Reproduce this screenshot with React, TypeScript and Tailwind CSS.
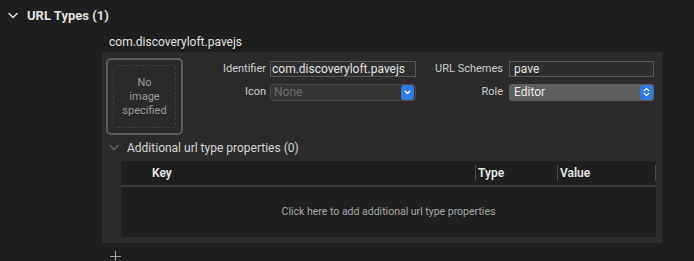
import React from "react";

const FONT = { fontFamily: "Roboto, 'Noto Sans', sans-serif" };

function Chevron({ className = "" }: { className?: string }) {
  return (
    <svg width="10" height="7" viewBox="0 0 10 7" className={className}>
      <path d="M1 1.5 L5 5.5 L9 1.5" fill="none" stroke="currentColor" strokeWidth="1.6" strokeLinecap="round" strokeLinejoin="round" />
    </svg>
  );
}

function BlueButton({ double }: { double?: boolean }) {
  return (
    <div className="flex h-[15px] w-[13px] items-center justify-center rounded-[3px] bg-[#2f7ae5]">
      {double ? (
        <svg width="7" height="10" viewBox="0 0 7 10">
          <path d="M1.2 3.6 L3.5 1.4 L5.8 3.6 M1.2 6.4 L3.5 8.6 L5.8 6.4" fill="none" stroke="white" strokeWidth="1.3" strokeLinecap="round" strokeLinejoin="round" />
        </svg>
      ) : (
        <svg width="7" height="5" viewBox="0 0 7 5">
          <path d="M1.2 1.2 L3.5 3.5 L5.8 1.2" fill="none" stroke="white" strokeWidth="1.4" strokeLinecap="round" strokeLinejoin="round" />
        </svg>
      )}
    </div>
  );
}

export default function App() {
  return (
    <div className="h-[261px] w-[694px] overflow-hidden bg-[#1e1e1e] text-[12px] text-[#dcdcdc]" style={FONT}>
      <div className="flex h-[30px] items-center pl-[8px] pt-[1px]">
        <Chevron className="text-[#d8d8d8]" />
        <span className="ml-[9px] text-[13px] font-bold text-[#e0e0e0]">URL Types (1)</span>
      </div>

      <div className="ml-[102px] w-[560px]">
        <div className="flex h-[22px] items-center pl-[7px] pt-[2px] text-[12px] text-[#e2e2e2]">com.discoveryloft.pavejs</div>

        <div className="bg-[#2b2b2b] pb-[6px]">
          <div className="flex pt-[6px]">
            <div className="ml-[4px] flex h-[77px] w-[77px] items-center justify-center rounded-[5px] border-2 border-[#5c5c5c] bg-[#2a2a2a] p-[5px]">
              <div className="flex h-full w-full items-center justify-center rounded-[3px] border border-dashed border-[#3f3f3f] text-center text-[11px] leading-[14px] text-[#9a9a9a]">
                No
                <br />
                image
                <br />
                specified
              </div>
            </div>

            <div className="grid grid-cols-[83px_146px] content-start items-center gap-x-[4px] gap-y-[6px] pt-[3px]">
              <span className="text-right text-[11px] text-[#cfcfcf]">Identifier</span>
              <div className="flex h-[16px] items-center border border-[#575757] bg-[#2e2e2e] px-[1px] text-[#e4e4e4]">com.discoveryloft.pavejs</div>
              <span className="text-right text-[11px] text-[#cfcfcf]">Icon</span>
              <div className="flex h-[17px] items-center justify-between rounded-[3px] border border-[#4a4a4a] bg-[#333333] pl-[3px] pr-[1px] text-[#6e6e6e]">
                <span>None</span>
                <BlueButton />
              </div>
            </div>

            <div className="grid grid-cols-[87px_145px] content-start items-center gap-x-[6px] gap-y-[6px] pt-[3px]">
              <span className="text-right text-[11px] text-[#cfcfcf]">URL Schemes</span>
              <div className="flex h-[16px] items-center border border-[#575757] bg-[#2e2e2e] px-[4px] text-[#e4e4e4]">pave</div>
              <span className="text-right text-[11px] text-[#cfcfcf]">Role</span>
              <div className="flex h-[17px] items-center justify-between rounded-[3px] bg-[#5e5e5e] pl-[5px] pr-[1px] text-[#ececec]">
                <span>Editor</span>
                <BlueButton double />
              </div>
            </div>
          </div>

          <div className="flex h-[24px] items-center pl-[7px] pt-[1px]">
            <Chevron className="text-[#5f5f5f]" />
            <span className="ml-[8px] text-[#d6d6d6]">Additional url type properties (0)</span>
          </div>

          <div className="ml-[19px] mr-[6px] mt-[2px] bg-[#1e1e1e]">
            <div className="flex h-[26px] items-center border-b-2 border-[#3a3a3a] text-[12px] font-semibold text-[#e6e6e6]">
              <div className="w-[354px] pl-[31px]">Key</div>
              <div className="flex h-[16px] w-[82px] items-center border-l border-[#4a4a4a] pl-[2px]">Type</div>
              <div className="flex h-[16px] flex-1 items-center border-l border-[#4a4a4a] pl-[2px]">Value</div>
              <div className="h-[16px] w-0 border-l border-[#4a4a4a]" />
            </div>
            <div className="flex h-[50px] items-center justify-center text-[10.5px] text-[#a8a8a8]">
              Click here to add additional url type properties
            </div>
          </div>
        </div>

        <div className="flex h-[24px] items-center pl-[8px] pt-[2px]">
          <svg width="11" height="11" viewBox="0 0 11 11">
            <path d="M5.5 0 V11 M0 5.5 H11" stroke="#a0a0a0" strokeWidth="1" />
          </svg>
        </div>
      </div>
    </div>
  );
}
